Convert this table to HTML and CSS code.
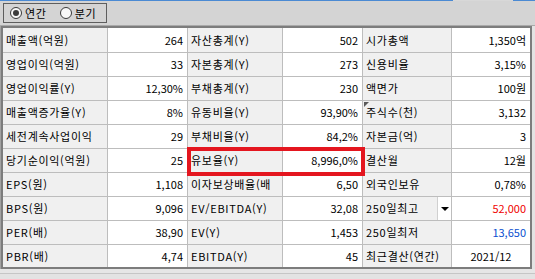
FILE: index.html
```html
<!DOCTYPE html>
<html lang="ko">
<head>
<meta charset="utf-8">
<title>재무 요약</title>
<link rel="stylesheet" href="styles.css">
</head>
<body>
<div class="page">
  <div class="tabline"><span class="tl-blue tl-a"></span><span class="tl-gap"></span><span class="tl-blue tl-b"></span></div>
  <div class="toolbar">
    <div class="radio-box">
      <label class="radio"><span class="dot on"></span><span>연간</span></label>
      <label class="radio"><span class="dot"></span><span>분기</span></label>
    </div>
  </div>
  <div class="frame">
    <div class="grid">
      <div class="lb">매출액(억원)</div><div class="vl">264</div>
      <div class="lb">자산총계(Y)</div><div class="vl">502</div>
      <div class="lb">시가총액</div><div class="vl">1,350억</div>

      <div class="lb">영업이익(억원)</div><div class="vl">33</div>
      <div class="lb">자본총계(Y)</div><div class="vl">273</div>
      <div class="lb">신용비율</div><div class="vl">3,15%</div>

      <div class="lb">영업이익률(Y)</div><div class="vl">12,30%</div>
      <div class="lb">부채총계(Y)</div><div class="vl">230</div>
      <div class="lb">액면가</div><div class="vl">100원</div>

      <div class="lb">매출액증가율(Y)</div><div class="vl">8%</div>
      <div class="lb">유동비율(Y)</div><div class="vl">93,90%</div>
      <div class="lb marked">주식수(천)</div><div class="vl">3,132</div>

      <div class="lb">세전계속사업이익</div><div class="vl">29</div>
      <div class="lb">부채비율(Y)</div><div class="vl">84,2%</div>
      <div class="lb">자본금(억)</div><div class="vl">3</div>

      <div class="lb">당기순이익(억원)</div><div class="vl">25</div>
      <div class="lb">유보율(Y)</div><div class="vl">8,996,0%</div>
      <div class="lb">결산월</div><div class="vl">12월</div>

      <div class="lb">EPS(원)</div><div class="vl">1,108</div>
      <div class="lb">이자보상배율(배</div><div class="vl">6,50</div>
      <div class="lb">외국인보유</div><div class="vl">0,78%</div>

      <div class="lb">BPS(원)</div><div class="vl">9,096</div>
      <div class="lb">EV/EBITDA(Y)</div><div class="vl">32,08</div>
      <div class="lb with-btn"><span>250일최고</span><span class="dd-btn"><span class="tri"></span></span></div><div class="vl red">52,000</div>

      <div class="lb">PER(배)</div><div class="vl">38,90</div>
      <div class="lb">EV(Y)</div><div class="vl">1,453</div>
      <div class="lb">250일최저</div><div class="vl blue">13,650</div>

      <div class="lb">PBR(배)</div><div class="vl">4,74</div>
      <div class="lb">EBITDA(Y)</div><div class="vl">45</div>
      <div class="lb">최근결산(연간)</div><div class="vl center">2021/12</div>

      <div class="highlight"></div>
    </div>
  </div>
  <div class="bottom"></div>
</div>
</body>
</html>
```
FILE: styles.css
```css
* { box-sizing: border-box; }
html, body { margin: 0; padding: 0; }
body {
  width: 535px;
  height: 279px;
  overflow: hidden;
  background: #e3e3e3;
  font-family: "Noto Sans CJK KR", "Noto Sans", sans-serif;
  font-size: 11px;
  color: #000;
}
.page { width: 535px; }

.tabline { display: flex; height: 1px; }
.tl-blue { background: #4b8ad3; }
.tl-a { width: 453px; }
.tl-gap { width: 60px; background: #d8d8d8; }
.tl-b { flex: 1; }

.toolbar {
  height: 25px;
  background: #d4d4d4;
  padding: 2px 0 0 3px;
  border-bottom: 1px solid #a9a9a9;
}
.radio-box {
  width: 104px;
  height: 20px;
  border: 1px solid #5e5e5e;
  display: flex;
  align-items: center;
  gap: 13px;
  padding-left: 6px;
}
.radio { display: flex; align-items: center; gap: 3px; line-height: 1; font-size: 11px; letter-spacing: 0.7px; }
.dot {
  width: 12px; height: 12px;
  border-radius: 50%;
  border: 1px solid #3a3a3a;
  background: #f7f7f7;
  display: flex; align-items: center; justify-content: center;
}
.dot.on::after {
  content: "";
  width: 6px; height: 6px;
  border-radius: 50%;
  background: #3c3c3c;
}

.frame {
  border-left: 1px solid #a2a2a2;
  background: #e3e3e3;
}
.grid {
  position: relative;
  display: grid;
  grid-template-columns: 104px 79px 94px 79px 88px 78px;
  grid-template-rows: 24px repeat(8, 23px) 22px;
  gap: 1px;
  background: #bdbdbd;
  border: 2px solid #7d7d7d;
  width: 531px;
}
.lb, .vl {
  display: flex;
  align-items: center;
  white-space: nowrap;
  overflow: hidden;
  line-height: 1;
}
.lb {
  background: #f0f0f0;
  padding-left: 3px;
  letter-spacing: 0.7px;
}
.vl {
  background: #ffffff;
  justify-content: flex-end;
  padding-right: 4px;
}
.vl.center { justify-content: center; padding-right: 0; }
.vl.red { color: #f00000; }
.vl.blue { color: #0a4fd0; }

.lb.marked { position: relative; }
.lb.marked::before {
  content: "";
  position: absolute;
  left: 1px; top: 1px;
  border-top: 5px solid #5a5a5a;
  border-right: 5px solid transparent;
}

.lb.with-btn { justify-content: space-between; padding-right: 0; align-items: stretch; }
.lb.with-btn > span:first-child { display: flex; align-items: center; }
.dd-btn {
  width: 14px;
  background: #ffffff;
  border-left: 1px solid #d0d0d0;
  display: flex; align-items: center; justify-content: center;
}
.tri {
  border-top: 4px solid #000;
  border-left: 4px solid transparent;
  border-right: 4px solid transparent;
}

.highlight {
  position: absolute;
  left: 184px;
  top: 119px;
  width: 178px;
  height: 29px;
  border: 4px solid #e4161f;
  pointer-events: none;
}

.bottom {
  height: 11px;
  background: #e3e3e3;
  border-top: 4px solid #e6e6e6;
}
.bottom::before {
  content: "";
  display: block;
  height: 1px;
  background: #c6c6c6;
}
```
